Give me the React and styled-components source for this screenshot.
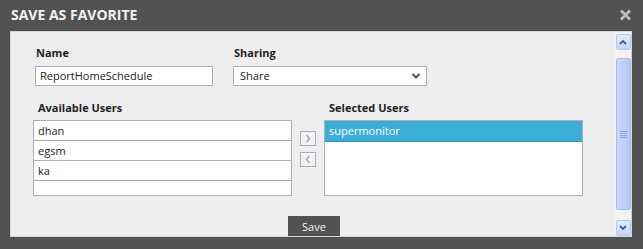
import React from "react";
import styled, { createGlobalStyle } from "styled-components";

const Global = createGlobalStyle`
  html, body { margin: 0; padding: 0; background: #525252; }
  body { font-family: "Open Sans", "DejaVu Sans", sans-serif; }
`;

const Dialog = styled.div`
  width: 643px;
  height: 249px;
  background: #525252;
  display: flex;
  flex-direction: column;
  overflow: hidden;
`;

const Header = styled.div`
  height: 31px;
  display: flex;
  align-items: center;
  justify-content: space-between;
  padding: 0 11px 0 11px;
  box-sizing: border-box;
`;

const Title = styled.div`
  color: #f2f2f2;
  font: bold 14px "Open Sans", sans-serif;
  line-height: 20px;
  margin-top: -1px;
`;

const Close = styled.svg`
  width: 13px;
  height: 12px;
  margin-top: -1px;
`;

const Panel = styled.div`
  margin-left: 10px;
  width: 622px;
  height: 206px;
  box-sizing: border-box;
  background: #eeeeee;
  border: 1px solid #d6d6d6;
  display: flex;
  overflow: hidden;
`;

const Content = styled.div`
  flex: 1;
  padding: 14px 0 0 24px;
  display: flex;
  flex-direction: column;
`;

const Row = styled.div`
  display: flex;
  align-items: flex-start;
`;

const Field = styled.div`
  display: flex;
  flex-direction: column;
  width: ${(p) => p.$w}px;
  margin-right: ${(p) => p.$mr || 0}px;
`;

const Label = styled.div`
  font: bold 11px "Open Sans", sans-serif;
  color: #222;
  height: 14px;
  line-height: 14px;
  margin-left: ${(p) => p.$ml ?? 1}px;
  margin-bottom: ${(p) => p.$mb ?? 6}px;
`;

const TextBox = styled.div`
  height: 20px;
  box-sizing: border-box;
  border: 1px solid #aab0ba;
  background: #fff;
  font: 11px "Open Sans", sans-serif;
  color: #222;
  line-height: 18px;
  padding-left: ${(p) => p.$pl ?? 4}px;
  display: flex;
  align-items: center;
  justify-content: space-between;
`;

const Chevron = styled.svg`
  width: 10px;
  height: 6px;
  margin-right: 5px;
`;

const ListsRow = styled.div`
  display: flex;
  align-items: flex-start;
  margin-top: 15px;
  margin-left: -2px;
`;

const ListBox = styled.div`
  width: 259px;
  height: 76px;
  box-sizing: border-box;
  border: 1px solid #aab0ba;
  background: #fff;
  overflow: hidden;
`;

const Item = styled.div`
  height: 20px;
  box-sizing: border-box;
  border-bottom: 1px solid #aab0ba;
  font: 11px "Open Sans", sans-serif;
  line-height: 19px;
  padding-left: 4px;
  color: #222;
`;

const SelItem = styled.div`
  height: 21px;
  box-sizing: border-box;
  background: #3badd9;
  border-bottom: 1px solid #2b93c4;
  font: 11px "Open Sans", sans-serif;
  line-height: 19px;
  padding-left: 4px;
  color: #fff;
`;

const MoveCol = styled.div`
  display: flex;
  flex-direction: column;
  gap: 6px;
  margin: 30px 8px 0 8px;
`;

const MoveBtn = styled.div`
  width: 16px;
  height: 15px;
  box-sizing: border-box;
  border: 1px solid #aab0ba;
  background: #f3f3f3;
  display: flex;
  align-items: center;
  justify-content: center;
`;

const Footer = styled.div`
  display: flex;
  justify-content: center;
  margin-top: 20px;
  padding-right: 22px;
`;

const SaveBtn = styled.div`
  width: 52px;
  height: 20px;
  background: #525252;
  color: #f4f4f4;
  font: 11px "Open Sans", sans-serif;
  display: flex;
  align-items: center;
  justify-content: center;
`;

const ScrollBar = styled.div`
  width: 16px;
  margin: 1px 0 0 0;
  background: #f4f3ee;
  display: flex;
  flex-direction: column;
  align-items: center;
`;

const SBtn = styled.div`
  width: 15px;
  height: 16px;
  box-sizing: border-box;
  border: 1px solid #b7c8f3;
  border-radius: 2px;
  background: linear-gradient(to bottom, #e2eaff, #c3d3fb);
  display: flex;
  align-items: center;
  justify-content: center;
  margin-top: ${(p) => p.$mt || 0}px;
`;

const Thumb = styled.div`
  width: 15px;
  height: 153px;
  box-sizing: border-box;
  margin-top: 8px;
  border: 1px solid #a9bdef;
  border-radius: 2px;
  background: linear-gradient(to right, #c9d8fd, #bccefb 60%, #b4c7f8);
  display: flex;
  align-items: center;
  justify-content: center;
`;

const Grip = styled.svg`
  width: 7px;
  height: 8px;
`;

const Arrow = ({ dir }) => (
  <svg width="8" height="6" viewBox="0 0 8 6">
    <path
      d={dir === "up" ? "M1 5 L4 2 L7 5" : "M1 1 L4 4 L7 1"}
      stroke="#4d6185"
      strokeWidth="1.8"
      fill="none"
    />
  </svg>
);

const Caret = ({ dir }) => (
  <svg width="6" height="9" viewBox="0 0 6 9">
    <path
      d={dir === "right" ? "M1.5 1 L4.5 4.5 L1.5 8" : "M4.5 1 L1.5 4.5 L4.5 8"}
      stroke="#a3aab8"
      strokeWidth="1.6"
      fill="none"
    />
  </svg>
);

export default function App() {
  return (
    <>
      <Global />
      <Dialog>
        <Header>
          <Title>SAVE AS FAVORITE</Title>
          <Close viewBox="0 0 13 12">
            <path d="M2 1.5 L11 10.5 M11 1.5 L2 10.5" stroke="#bdbdbd" strokeWidth="2.8" />
          </Close>
        </Header>
        <Panel>
          <Content>
            <Row>
              <Field $w={178} $mr={20}>
                <Label>Name</Label>
                <TextBox $pl={4}>ReportHomeSchedule</TextBox>
              </Field>
              <Field $w={194}>
                <Label>Sharing</Label>
                <TextBox $pl={6}>
                  Share
                  <Chevron viewBox="0 0 10 6">
                    <path d="M1.5 1 L5 4.5 L8.5 1" stroke="#555" strokeWidth="2" fill="none" />
                  </Chevron>
                </TextBox>
              </Field>
            </Row>
            <ListsRow>
              <Field $w={259}>
                <Label $ml={5} $mb={5}>Available Users</Label>
                <ListBox>
                  <Item>dhan</Item>
                  <Item>egsm</Item>
                  <Item>ka</Item>
                  <Item></Item>
                </ListBox>
              </Field>
              <MoveCol>
                <MoveBtn>
                  <Caret dir="right" />
                </MoveBtn>
                <MoveBtn>
                  <Caret dir="left" />
                </MoveBtn>
              </MoveCol>
              <Field $w={259}>
                <Label $ml={5} $mb={5}>Selected Users</Label>
                <ListBox>
                  <SelItem>supermonitor</SelItem>
                </ListBox>
              </Field>
            </ListsRow>
            <Footer>
              <SaveBtn>Save</SaveBtn>
            </Footer>
          </Content>
          <ScrollBar>
            <SBtn $mt={1}>
              <Arrow dir="up" />
            </SBtn>
            <Thumb>
              <Grip viewBox="0 0 7 8">
                <path d="M0 1.5 H7 M0 3.5 H7 M0 5.5 H7 M0 7.5 H7" stroke="#8fa6e6" strokeWidth="1" />
              </Grip>
            </Thumb>
            <SBtn $mt={10}>
              <Arrow dir="down" />
            </SBtn>
          </ScrollBar>
        </Panel>
      </Dialog>
    </>
  );
}
